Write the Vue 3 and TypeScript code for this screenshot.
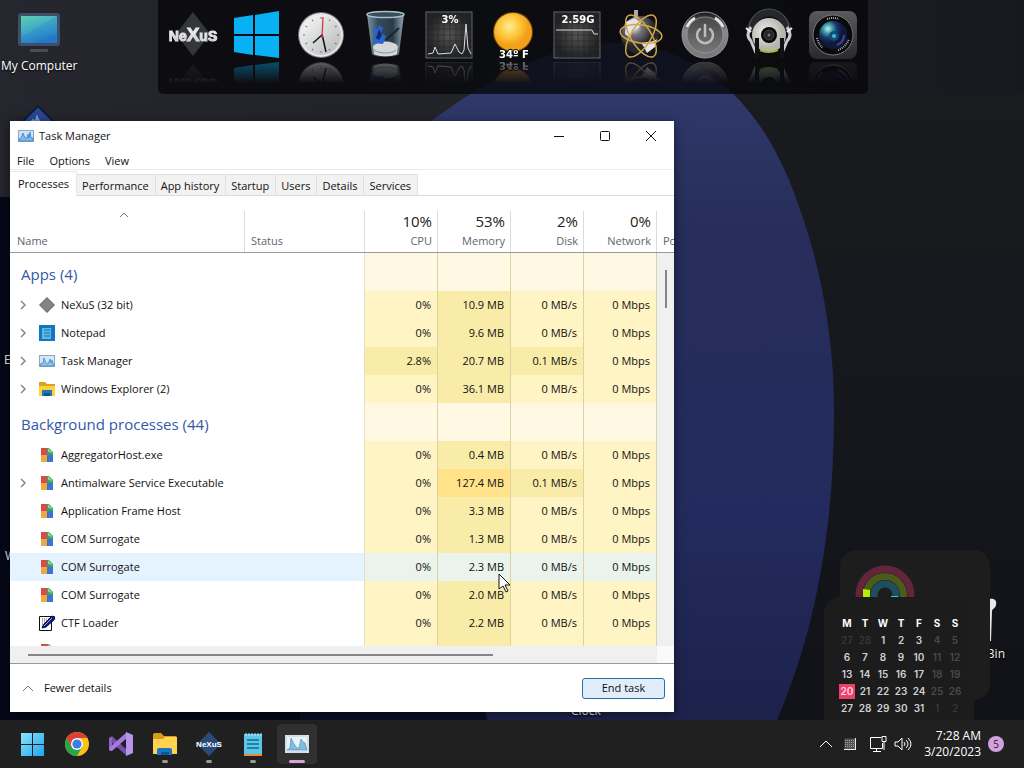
<script setup lang="ts">
interface Proc {
  name: string
  icon: string
  open?: boolean
  cpu: string
  mem: string
  disk: string
  net: string
  hot?: boolean
  selected?: boolean
}
interface Group {
  title: string
  rows: Proc[]
}

const p = (name: string, icon: string, mem: string, extra: Partial<Proc> = {}): Proc => ({
  name, icon, cpu: '0%', mem, disk: '0 MB/s', net: '0 Mbps', ...extra,
})

const groups: Group[] = [
  {
    title: 'Apps (4)',
    rows: [
      p('NeXuS (32 bit)', 'nexus', '10.9 MB', { open: true }),
      p('Notepad', 'notepad', '9.6 MB', { open: true }),
      p('Task Manager', 'taskmgr', '20.7 MB', { open: true, cpu: '2.8%', disk: '0.1 MB/s' }),
      p('Windows Explorer (2)', 'folder', '36.1 MB', { open: true }),
    ],
  },
  {
    title: 'Background processes (44)',
    rows: [
      p('AggregatorHost.exe', 'exe', '0.4 MB'),
      p('Antimalware Service Executable', 'exe', '127.4 MB', { open: true, disk: '0.1 MB/s', hot: true }),
      p('Application Frame Host', 'exe', '3.3 MB'),
      p('COM Surrogate', 'exe', '1.3 MB'),
      p('COM Surrogate', 'exe', '2.3 MB', { selected: true }),
      p('COM Surrogate', 'exe', '2.0 MB'),
      p('CTF Loader', 'ctf', '2.2 MB'),
      p('', 'exe', '', { cpu: '', disk: '', net: '' }),
    ],
  },
]

const tabs = ['Processes', 'Performance', 'App history', 'Startup', 'Users', 'Details', 'Services']
const columns = [
  { total: '10%', label: 'CPU' },
  { total: '53%', label: 'Memory' },
  { total: '2%', label: 'Disk' },
  { total: '0%', label: 'Network' },
]

const dock = ['nexus', 'windows', 'clock', 'trash', 'cpu', 'weather', 'ram', 'globe', 'power', 'music', 'camera']
const pinned = [
  { id: 'start', label: 'Start' },
  { id: 'chrome', label: 'Chrome' },
  { id: 'vs', label: 'Visual Studio' },
  { id: 'folder', label: 'File Explorer', running: true },
  { id: 'nexus', label: 'NeXuS', running: true },
  { id: 'notepad', label: 'Notepad', running: true },
  { id: 'taskmgr', label: 'Task Manager', running: true, active: true },
]

const weekdays = ['M', 'T', 'W', 'T', 'F', 'S', 'S']
const weeks: number[][] = [
  [27, 28, 1, 2, 3, 4, 5],
  [6, 7, 8, 9, 10, 11, 12],
  [13, 14, 15, 16, 17, 18, 19],
  [20, 21, 22, 23, 24, 25, 26],
  [27, 28, 29, 30, 31, 1, 2],
]
const dayClass = (w: number, d: number) => ({
  outside: (w === 0 && d < 2) || (w === 4 && d > 4),
  weekend: d > 4,
  today: w === 3 && d === 0,
})
const ticks = Array.from({ length: 12 }, (_, i) => i * 30)
</script>

<template>
  <div class="desktop">
    <svg class="wallpaper" viewBox="0 0 1024 768" preserveAspectRatio="none" aria-hidden="true">
      <defs>
        <linearGradient id="wpTop" x1="0" y1="0" x2="1" y2="0">
          <stop offset="0" stop-color="#25262e" /><stop offset=".5" stop-color="#222328" /><stop offset="1" stop-color="#18191e" />
        </linearGradient>
        <linearGradient id="wpRight" x1="0" y1="0" x2="0" y2="1">
          <stop offset="0" stop-color="#1a1b1f" /><stop offset=".5" stop-color="#16171c" /><stop offset="1" stop-color="#101116" />
        </linearGradient>
        <linearGradient id="wpBlue" x1="0" y1="0" x2="0" y2="1">
          <stop offset="0" stop-color="#323c70" /><stop offset=".25" stop-color="#272e5b" /><stop offset=".65" stop-color="#232b5e" /><stop offset="1" stop-color="#1b2046" />
        </linearGradient>
      </defs>
      <rect width="1024" height="768" fill="url(#wpTop)" />
      <rect x="674" y="94" width="350" height="674" fill="url(#wpRight)" />
      <rect y="197" width="300" height="571" fill="#060817" />
      <rect x="300" y="600" width="240" height="168" fill="#0b0e24" />
      <path d="M350 190C440 105 530 46 610 43c76 0 140 44 179 137 30 74 45 150 45 232 0 105-15 211-57 308l-20 48H500z" fill="url(#wpBlue)" />
    </svg>

    <div class="shortcut">
      <svg viewBox="0 0 48 44" aria-hidden="true">
        <defs><linearGradient id="scr" x1="0" y1="0" x2=".4" y2="1"><stop offset="0" stop-color="#5fd0b4" /><stop offset=".55" stop-color="#3fa9c4" /><stop offset="1" stop-color="#2277c8" /></linearGradient></defs>
        <rect x="3" y="3" width="42" height="33" rx="3" fill="#3d5068" /><rect x="6" y="6" width="36" height="27" fill="url(#scr)" />
        <path d="M42 6v10L21 33H6v-6z" fill="#2d86cf" opacity=".35" /><rect x="15" y="39" width="18" height="3" rx="1" fill="#4a4d52" />
      </svg>
      <span>My Computer</span>
    </div>
    <svg class="nexus-shortcut" viewBox="0 0 48 48" aria-hidden="true"><path d="M24 1l23 23-23 23L1 24z" fill="#29478f" stroke="#10193b" stroke-width="2" /><path d="M15 19l4-4 2 3 2-6 3 6" stroke="#7f9bd0" stroke-width="2" fill="none" /></svg>
    <span class="hidden-label label-e">E</span>
    <span class="hidden-label label-w">W</span>
    <span class="hidden-label label-clock">Clock</span>

    <svg class="bin-edge" viewBox="0 0 12 44" aria-hidden="true"><path d="M4 1c6-1 8 2 7 6-1 4-3 3-4 6L6 43H4z" fill="#e8e8e8" /></svg>
    <span class="hidden-label label-bin">Bin</span>

    <nav class="dock" aria-label="Dock">
      <a v-for="id in dock" :key="id" href="#" :aria-label="id" class="dock-item">
        <svg v-if="id === 'nexus'" viewBox="0 0 48 48">
          <defs><linearGradient id="chromeText" x1="0" y1="0" x2="0" y2="1"><stop offset="0" stop-color="#fff" /><stop offset=".6" stop-color="#e2e2e2" /><stop offset="1" stop-color="#999" /></linearGradient></defs>
          <path d="M24 2l17 22-17 22L7 24z" fill="#33363a" />
          <text x="24" y="31" text-anchor="middle" class="logo-text" fill="url(#chromeText)" stroke="#e0e0e0">Ne<tspan class="logo-x">X</tspan>uS</text>
        </svg>
        <svg v-else-if="id === 'windows'" viewBox="0 0 48 48"><path d="M1 8l19-3v19H1zM22 5l24-4v23H22zM1 26h19v19L1 42zM22 26h24v22l-24-3z" fill="#08b1f4" /></svg>
        <svg v-else-if="id === 'clock'" viewBox="0 0 48 48">
          <defs><linearGradient id="ck" x1="0" y1="0" x2="1" y2="1"><stop offset="0" stop-color="#fafafa" /><stop offset="1" stop-color="#b4b8b6" /></linearGradient></defs>
          <circle cx="24" cy="25" r="23" fill="#777" /><circle cx="24" cy="25" r="22" fill="#e8e8e8" /><circle cx="24" cy="25" r="20" fill="url(#ck)" />
          <path v-for="a in ticks" :key="a" d="M24 7v2" :transform="`rotate(${a} 24 25)`" stroke="#777" stroke-width="1" />
          <path d="M25 25l-9 8M25 24l4 18" stroke="#111" stroke-width="1.500" /><path d="M25 28l1-21" stroke="#dc3545" stroke-width="1.300" />
        </svg>
        <svg v-else-if="id === 'trash'" viewBox="0 0 48 48">
          <defs><linearGradient id="tr"><stop offset="0" stop-color="#7d95a4" /><stop offset=".3" stop-color="#354b5b" /><stop offset=".7" stop-color="#293a49" /><stop offset="1" stop-color="#93a9b5" /></linearGradient></defs>
          <path d="M6 4h37l-5 40c-3 4-24 4-27 0z" fill="url(#tr)" />
          <path d="M12 36c6-6 20-6 25 0l-1 8c-4 3-19 3-23 0z" fill="#d4d7d8" /><path d="M13 40c5 4 18 4 22 0" stroke="#8a8f92" fill="none" />
          <path d="M13 18l4 1 1-4 4 3-2 5 5 3-3 8-9-1-1-6 3-2-3-3z" fill="#2b63d7" /><path d="M18 19l3 6-3 5-3-2z" fill="#132b65" />
          <path d="M25 30L38 18" stroke="#1d242c" stroke-width="2" /><ellipse cx="24.500" cy="4.500" rx="18.500" ry="3" fill="#384e59" stroke="#a9bfca" stroke-width="1.500" />
        </svg>
        <svg v-else-if="id === 'cpu' || id === 'ram'" viewBox="0 0 48 48">
          <defs><radialGradient :id="'grid' + id"><stop offset="0" stop-color="#555" /><stop offset="1" stop-color="#222326" /></radialGradient></defs>
          <rect x="1" y="2" width="46" height="46" :fill="`url(#grid${id})`" stroke="#65676b" />
          <path d="M1 13h46M1 19h46M1 25h46M1 31h46M1 37h46M1 43h46M7 2v46M13 2v46M19 2v46M25 2v46M31 2v46M37 2v46M43 2v46" stroke="#222" stroke-width=".5" />
          <path v-if="id === 'cpu'" d="M3 44l5-1 2-6 3 7 13-1 4-9 4 8 3 2 2-4 2-26 2 24 3 6" fill="none" stroke="#ddd" />
          <path v-else d="M3 20h36l2 4h4" fill="none" stroke="#ddd" />
          <text x="25" y="13" text-anchor="middle" class="gauge-text">{{ id === 'cpu' ? '3%' : '2.59G' }}</text>
        </svg>
        <svg v-else-if="id === 'weather'" viewBox="0 0 48 48">
          <defs><radialGradient id="sun" cx=".4" cy=".35"><stop offset="0" stop-color="#ffec91" /><stop offset=".6" stop-color="#fdc437" /><stop offset="1" stop-color="#f3a019" /></radialGradient></defs>
          <circle cx="24" cy="22" r="20" fill="#d47b08" opacity=".5" /><circle cx="24" cy="22" r="19" fill="url(#sun)" />
          <text x="25" y="48" text-anchor="middle" class="gauge-text outlined">34º F</text>
        </svg>
        <svg v-else-if="id === 'globe'" viewBox="0 0 48 48">
          <defs><radialGradient id="gl" cx=".35" cy=".3"><stop offset="0" stop-color="#f0edf2" /><stop offset=".4" stop-color="#77747d" /><stop offset="1" stop-color="#26262c" /></radialGradient></defs>
          <circle cx="23" cy="25" r="19" fill="url(#gl)" /><path d="M9 12l8-4 7 4-2 6-6 2-3 8-5-4zM24 33l13-2 3-2-2 8-8 6-3-6z" fill="#e6e2ea" />
          <rect x="17" y="0" width="4" height="9" fill="#aaa" />
          <g fill="none" stroke="#d0a944" stroke-width="1.500"><ellipse cx="24" cy="26" rx="10" ry="24" transform="rotate(32 24 26)" /><ellipse cx="24" cy="26" rx="10" ry="24" transform="rotate(-32 24 26)" /><ellipse cx="24" cy="24" rx="21" ry="9" transform="rotate(8 24 24)" /></g>
        </svg>
        <svg v-else-if="id === 'power'" viewBox="0 0 48 48">
          <defs>
            <linearGradient id="pw" x1="0" y1="0" x2="0" y2="1"><stop offset="0" stop-color="#151515" /><stop offset=".4" stop-color="#888" /><stop offset="1" stop-color="#777" /></linearGradient>
            <linearGradient id="pwi" x1="0" y1="0" x2="0" y2="1"><stop offset="0" stop-color="#484848" /><stop offset="1" stop-color="#777" /></linearGradient>
          </defs>
          <circle cx="24" cy="25" r="23" fill="url(#pw)" stroke="#999" /><path d="M6 17a20 20 0 018-9M34 8a20 20 0 018 9" fill="none" stroke="#e5e5e5" stroke-width="3" />
          <circle cx="24" cy="25" r="18" fill="url(#pwi)" stroke="#999" stroke-width=".8" /><path d="M19 19a8 8 0 1010 0M24 15v11" stroke="#bcbcbc" stroke-width="2.500" fill="none" stroke-linecap="round" />
        </svg>
        <svg v-else-if="id === 'music'" viewBox="0 0 48 48">
          <defs><radialGradient id="disc" cx=".4" cy=".4"><stop offset="0" stop-color="#eee" /><stop offset="1" stop-color="#b3b6ac" /></radialGradient></defs>
          <path d="M5 22a19 19 0 0138 0" fill="none" stroke="#26272a" stroke-width="7" /><path d="M4 19a20 20 0 0140 0" fill="none" stroke="#555" />
          <path d="M6 17q-6 8 0 14l5 12M42 17q6 8 0 14l-5 12" fill="none" stroke="#c9cbcc" stroke-width="3" /><path d="M1 18l5 4M47 18l-5 4" stroke="#eee" stroke-width="2" />
          <circle cx="24" cy="25" r="17" fill="url(#disc)" /><circle cx="24" cy="25" r="8" fill="#080808" /><circle cx="24" cy="25" r="5" fill="#252525" stroke="#444" /><circle cx="24" cy="25" r="1.500" fill="#777" />
          <path d="M15 40q9 4 18 0" stroke="#a5b831" stroke-width="2" fill="none" /><path d="M12 28v20M37 28v20" stroke="#111" stroke-width="4" />
        </svg>
        <svg v-else viewBox="0 0 48 48">
          <defs>
            <linearGradient id="body" x1="0" y1="0" x2="0" y2="1"><stop offset="0" stop-color="#5a5a5d" /><stop offset="1" stop-color="#29292b" /></linearGradient>
            <radialGradient id="lens" cx=".32" cy=".28"><stop offset="0" stop-color="#c6eee8" /><stop offset=".35" stop-color="#3698a8" /><stop offset=".65" stop-color="#1d3468" /><stop offset="1" stop-color="#12183a" /></radialGradient>
          </defs>
          <rect x="0" y="1" width="48" height="48" rx="8" fill="url(#body)" /><circle cx="24" cy="25" r="20" fill="#090a0c" stroke="#777" /><path d="M18 9q6-2 12 0M8 28q2 7 6 10M29 40q8-3 11-11" fill="none" stroke="#aaa" stroke-width="2" stroke-dasharray="1 1" /><circle cx="24" cy="25" r="14" fill="url(#lens)" /><path d="M35 25a11 11 0 01-7 10" fill="none" stroke="#3a4499" stroke-width="2" /><circle cx="25" cy="26" r="5" fill="#0d4d78" /><circle cx="25" cy="26" r="2" fill="#49b8d4" />
        </svg>
      </a>
    </nav>

    <section class="widget" aria-label="Activity">
      <svg viewBox="0 0 60 60" aria-hidden="true">
        <g fill="none" stroke-width="7"><circle cx="30" cy="30" r="26" stroke="#63253b" /><circle cx="30" cy="30" r="18.500" stroke="#4c5a1c" /><circle cx="30" cy="30" r="11" stroke="#1c5061" /></g>
        <path d="M8 35V24l7 1v10z" fill="#b5f000" /><path d="M36 31h7v4h-7z" fill="#15cce0" /><path d="M45 32h6v3h-6z" fill="#b5f000" />
      </svg>
    </section>

    <section class="calendar" aria-label="Calendar">
      <table>
        <thead><tr><th v-for="(d, i) in weekdays" :key="i">{{ d }}</th></tr></thead>
        <tbody>
          <tr v-for="(week, w) in weeks" :key="w">
            <td v-for="(day, d) in week" :key="d" :class="dayClass(w, d)">{{ day }}</td>
          </tr>
        </tbody>
      </table>
    </section>

    <main class="window">
      <header class="titlebar">
        <svg class="i16" viewBox="0 0 16 16"><rect x=".5" y="2.500" width="15" height="11" fill="#c9e4f7" stroke="#8da9c0" /><path d="M1 11l2-1 2-5 2 5 2 0 1-4 1 4 1-6 1 6 2 0v3H1z" fill="#82bbe8" stroke="#3580c4" stroke-width=".8" /></svg>
        <h1>Task Manager</h1>
        <button type="button" aria-label="Minimize"><svg viewBox="0 0 12 12"><path d="M1 6.500h10" /></svg></button>
        <button type="button" aria-label="Maximize"><svg viewBox="0 0 12 12"><rect x="1.500" y="1.500" width="9" height="9" rx="1" /></svg></button>
        <button type="button" aria-label="Close"><svg viewBox="0 0 12 12"><path d="M1 1l10 10M11 1L1 11" /></svg></button>
      </header>
      <div class="menubar">
        <button type="button">File</button><button type="button">Options</button><button type="button">View</button>
      </div>
      <div class="tabs" role="tablist">
        <button v-for="(t, i) in tabs" :key="t" type="button" role="tab" :aria-selected="i === 0" :class="{ current: i === 0 }">{{ t }}</button>
      </div>

      <div class="list">
        <table class="procs">
          <colgroup><col /><col class="c-status" /><col v-for="c in columns" :key="c.label" class="c-num" /><col class="c-end" /></colgroup>
          <thead>
            <tr>
              <th class="h-name"><svg class="sort" viewBox="0 0 10 6"><path d="M1 5l4-4 4 4" /></svg><small>Name</small></th>
              <th class="h-status"><small>Status</small></th>
              <th v-for="c in columns" :key="c.label" class="h-num"><b>{{ c.total }}</b><small>{{ c.label }}</small></th>
              <th class="h-end"><small>Power usage</small></th>
            </tr>
          </thead>
          <tbody v-for="g in groups" :key="g.title">
            <tr class="group"><th colspan="2" scope="rowgroup">{{ g.title }}</th><td class="num" /><td class="num" /><td class="num" /><td class="num" /><td class="rail" /></tr>
            <tr v-for="(r, i) in g.rows" :key="i" :class="{ selected: r.selected }">
              <td colspan="2" class="name">
                <div>
                  <svg class="arrow" viewBox="0 0 8 10"><path v-if="r.open" d="M2 1l4 4-4 4" /></svg>
                  <svg v-if="r.icon === 'nexus'" class="i16" viewBox="0 0 16 16"><path d="M8 0l8 8-8 8-8-8z" fill="#62686b" /><path d="M8 1l7 7-7 7-7-7z" fill="#7f8486" /></svg>
                  <svg v-else-if="r.icon === 'notepad'" class="i16" viewBox="0 0 16 16"><path d="M0 0h16v16H0z" fill="#0f78be" /><path d="M3 3h9v11H3z" fill="#63b9e5" /><path d="M5 5h6M5 8h6M5 11h6" stroke="#146fa9" /></svg>
                  <svg v-else-if="r.icon === 'taskmgr'" class="i16" viewBox="0 0 16 16"><rect x=".5" y="2.500" width="15" height="11" fill="#d2e8f8" stroke="#8da9c0" /><path d="M1 11l3-1 1-5 2 5 2 1 2-5 1 4 1-3 1 4 1 0v2H1z" fill="#91c4ea" stroke="#4489c3" stroke-width=".8" /></svg>
                  <svg v-else-if="r.icon === 'folder'" class="i16" viewBox="0 0 16 16"><path d="M0 1h6l2 2h8v12H0z" fill="#d9a418" /><path d="M0 5h16v10H0z" fill="#ffd044" /><path d="M3 9h10v6H3z" fill="#1e78b4" /><path d="M5 12h6v3H5z" fill="#15558d" /></svg>
                  <svg v-else-if="r.icon === 'exe'" class="i16" viewBox="0 0 16 16"><path d="M2 1h6v7H2z" fill="#d94b4b" /><path d="M8 1h2l4 4v3H8z" fill="#36a853" /><path d="M9 1l5 5-5-1z" fill="#8ed39c" /><path d="M2 8h6v7H2z" fill="#efa83d" /><path d="M8 8h6v7H8z" fill="#3d73d4" /></svg>
                  <svg v-else class="i16" viewBox="0 0 16 16"><path d="M.5 1.500h12v14H.5z" fill="#fff" stroke="#111" /><path d="M3 4h8M3 6h7M3 8h4M3 10h3" stroke="#555" stroke-dasharray="1 1" /><path d="M3 13l2-4 8-8 3 1-1 3-8 7z" fill="#10217c" stroke="#080d40" /><path d="M5 11l8-8" stroke="#91a7e8" /></svg>
                  <span>{{ r.name }}</span>
                </div>
              </td>
              <td class="num" :class="{ warm: r.cpu === '2.8%' }">{{ r.cpu }}</td>
              <td class="num warm" :class="{ hot: r.hot }">{{ r.mem }}</td>
              <td class="num" :class="{ warm: r.disk === '0.1 MB/s' }">{{ r.disk }}</td>
              <td class="num">{{ r.net }}</td>
              <td class="rail" />
            </tr>
          </tbody>
        </table>
        <i class="vthumb" />
      </div>
      <div class="hscroll"><i /></div>
      <footer>
        <button type="button" class="fewer"><svg viewBox="0 0 12 8"><path d="M1 7l5-5 5 5" /></svg>Fewer details</button>
        <button type="button" class="end">End task</button>
      </footer>
    </main>

    <div class="taskbar">
      <div class="pinned">
        <button v-for="a in pinned" :key="a.id" type="button" :aria-label="a.label" :class="{ running: a.running, active: a.active }">
          <svg v-if="a.id === 'start'" viewBox="0 0 24 24"><defs><linearGradient id="st" x1="0" y1="0" x2="1" y2="1"><stop offset="0" stop-color="#8ce4fb" /><stop offset="1" stop-color="#1ba5ef" /></linearGradient></defs><path d="M0 1h11v11H0zM12 1h11v11H12zM0 13h11v11H0zM12 13h11v11H12z" fill="url(#st)" /></svg>
          <svg v-else-if="a.id === 'chrome'" viewBox="0 0 24 24"><circle cx="12" cy="12" r="12" fill="#fbc116" /><path d="M1.600 6A12 12 0 0012 24l5.200-9L12 12 6.800 15z" fill="#2ba24c" /><path d="M12 6h10.400A12 12 0 001.600 6l5.200 9z" fill="#df3f36" /><circle cx="12" cy="12" r="6" fill="#fff" /><circle cx="12" cy="12" r="4.600" fill="#3b7de9" /></svg>
          <svg v-else-if="a.id === 'vs'" viewBox="0 0 24 24"><path d="M0 6l3-2 15 14v6L1 9z" fill="#7350ae" /><path d="M0 6l3-1v14l-3-1z" fill="#8d65c7" /><path d="M0 18l3 1L18 6V0L1 15z" fill="#a879dc" /><path d="M17 0l7 3v18l-7 3z" fill="#b993eb" /></svg>
          <svg v-else-if="a.id === 'folder'" viewBox="0 0 24 24"><path d="M0 3q0-2 2-2h6l3 3h11q2 0 2 2v14H0z" fill="#d69e18" /><path d="M0 7h10l2-2h12v17H0z" fill="#ffd251" /><path d="M4 23v-5q0-2 2-2h11q2 0 2 2v5z" fill="#1778bd" /><path d="M8 20h8v3H8z" fill="#105592" /></svg>
          <svg v-else-if="a.id === 'nexus'" viewBox="0 0 24 24"><path d="M12 0l12 12-12 12L0 12z" fill="#294a78" /><text x="12" y="15" text-anchor="middle" class="small-logo">NeXuS</text></svg>
          <svg v-else-if="a.id === 'notepad'" viewBox="0 0 24 24"><path d="M3 2h18v20H3z" fill="#5bc6e8" /><path d="M3 22h18v2H3z" fill="#e58b36" /><path d="M5 1v3M8 1v3M11 1v3M14 1v3M17 1v3M20 1v3" stroke="#b8e9f6" /><path d="M6 8h12M6 12h12M6 16h12" stroke="#166b91" stroke-width="1.500" /></svg>
          <svg v-else viewBox="0 0 24 24"><path d="M0 3h24v18H0z" fill="#d5dfe6" /><path d="M2 5h20v14H2z" fill="#e8f3fa" /><path d="M2 18l3-2 1-10 3 6 3 4h2l2-9 2 3 2 1 2 7H2z" fill="#7fbce0" stroke="#408ab6" stroke-width=".6" /></svg>
        </button>
      </div>
      <div class="tray">
        <button type="button" aria-label="Show hidden icons"><svg class="line" viewBox="0 0 16 16"><path d="M2 11l6-6 6 6" /></svg></button>
        <button type="button" aria-label="Touch keyboard"><svg viewBox="0 0 16 16"><path d="M2.500 2.500h11v11h-11z" fill="#555" /><path d="M3 4.500h10M3 6.500h10M3 8.500h10M3 10.500h10" stroke="#999" stroke-dasharray="1 1" /><path d="M2 13.500h12M13.500 2v12" stroke="#eee" /></svg></button>
        <button type="button" aria-label="Network" class="wide network"><svg class="line" viewBox="0 0 18 16"><path d="M12 1.500H1.500v11h12V7M7.500 12v3M4 15.500h8M13 .500h4v5h-4zM15 5v9" /></svg></button>
        <button type="button" aria-label="Volume" class="wide"><svg class="line" viewBox="0 0 18 16"><path d="M1 6h3l4-4v12l-4-4H1zM10 6q2 2 0 4M12 4q4 4 0 8M14 2q6 6 0 12" /></svg></button>
        <time datetime="2023-03-20T07:28">7:28 AM<br />3/20/2023</time>
        <span class="badge">5</span>
      </div>
    </div>

    <svg class="pointer" viewBox="0 0 13 20" aria-hidden="true"><path d="M1 1v15l4-3 3 6 2-1-3-6h5z" fill="#fff" stroke="#111" /></svg>
  </div>
</template>

<style>
body { margin: 0; background: #202020; }
</style>

<style scoped>
* { box-sizing: border-box; }
.desktop {
  position: relative;
  height: 100vh;
  overflow: hidden;
  font-family: "Open Sans", "Noto Sans", sans-serif;
  font-size: 12px;
  line-height: 16px;
  color: #111;
}
button { font: inherit; color: inherit; border: 0; background: none; padding: 0; }
svg { display: block; }
table { border-collapse: separate; border-spacing: 0; }
.wallpaper { position: absolute; inset: 0; width: 100%; height: 100%; }

.shortcut { position: absolute; left: 1px; top: 10px; color: #fff; display: flex; flex-direction: column; align-items: center; gap: 4px; text-shadow: 0 1px 2px #000; }
.shortcut svg { width: 48px; height: 44px; }
.nexus-shortcut { position: absolute; left: 14px; top: 105px; width: 48px; }
.hidden-label { position: absolute; color: #eee; text-shadow: 0 1px 2px #000; }
.label-e { left: 4px; top: 352px; }
.label-w { left: 5px; top: 548px; }
.label-clock { left: 571px; bottom: 49px; }
.label-bin { right: 19px; bottom: 106px; }
.bin-edge { position: absolute; right: 27px; bottom: 126px; width: 12px; height: 44px; }

.dock { position: absolute; left: 158px; top: 0; display: flex; gap: 16px; padding: 10px 11px 36px; background: rgba(8, 8, 11, .8); border-radius: 0 0 5px 5px; }
.dock-item { display: block; width: 48px; height: 48px; -webkit-box-reflect: below 4px linear-gradient(transparent 55%, rgba(0, 0, 0, .4)); }
.dock-item svg { width: 48px; height: 48px; overflow: visible; }
.logo-text { font: bold 14px "Liberation Sans", sans-serif; stroke-width: 1px; }
.logo-x { font-size: 19px; }
.gauge-text { font: bold 10px "DejaVu Sans", sans-serif; fill: #fff; }
.outlined { stroke: #111; stroke-width: 2px; paint-order: stroke; }

.widget { position: absolute; right: 34px; bottom: 68px; width: 150px; height: 150px; padding: 15px; border-radius: 16px; background: #1d1d1e; }
.widget svg { width: 60px; height: 60px; }
.calendar { position: absolute; right: 50px; bottom: 48px; padding: 18px 10px 3px 14px; border-radius: 16px 16px 0 0; background: #1c1c1d; }
.calendar th, .calendar td { width: 18px; height: 17px; padding: 1px; text-align: center; font: 600 10px/15px Inter, sans-serif; color: #d0d0d0; }
.calendar th { color: #fff; font-weight: 700; }
.calendar td.weekend { color: #4a4a4b; }
.calendar td.outside { color: #353536; }
.calendar td.today { background: #ee3f69; background-clip: content-box; color: #ffd9e2; }

.window { position: absolute; left: 10px; top: 121px; bottom: 56px; width: calc(100% - 360px); background: #fff; display: flex; flex-direction: column; font-size: 11px; box-shadow: 0 2px 10px rgba(0, 0, 0, .5); }
.titlebar { display: flex; align-items: center; height: 29px; padding-left: 8px; }
.titlebar h1 { flex: 1; margin: 0 0 0 5px; font-size: 11px; font-weight: 400; }
.titlebar button { width: 46px; height: 28px; display: grid; place-items: center; }
.titlebar button svg { width: 12px; height: 12px; fill: none; stroke: #111; }
.i16 { width: 16px; height: 16px; flex: none; }
.menubar { display: flex; gap: 15px; padding: 2px 7px 0; height: 20px; border-bottom: 1px solid #ececec; }
.tabs { display: flex; align-items: flex-end; height: 26px; border-bottom: 1px solid #dcdcdc; }
.tabs button { height: 21px; padding: 3px 6px 1px 5px; background: #f2f2f2; border: 1px solid #e0e0e0; border-width: 1px 1px 0 0; }
.tabs .current { height: 25px; background: #fff; padding: 1px 7px 2px 8px; border-color: #e8e8e8; margin-bottom: -1px; }

.list { position: relative; flex: 1; min-height: 0; overflow: hidden; }
.procs { width: 100%; table-layout: fixed; }
.c-status { width: 120px; }
.c-num { width: 73px; }
.c-end { width: 17px; }
thead th { font-weight: 400; }
.procs thead th { height: 57px; padding: 0 6px 3px; vertical-align: bottom; text-align: left; color: #5c6670; border-bottom: 1px solid #999; background: linear-gradient(#dcdcdc, #dcdcdc) right bottom / 1px 41px no-repeat; }
.procs thead .h-name { padding: 0 14px 3px 7px; }
.procs small { display: block; font-size: 11px; line-height: 16px; }
.procs b { display: block; font-weight: 400; font-size: 15px; line-height: 20px; margin-bottom: 2px; color: #222; }
.procs thead .h-num { text-align: right; }
.procs thead .h-end { overflow: hidden; white-space: nowrap; background: none; }
.sort { width: 10px; height: 6px; margin: 0 auto 15px; }
.sort path, .arrow path, .fewer path { fill: none; stroke: #777; }
.group th { height: 38px; padding: 4px 11px 0; font-size: 15px; line-height: 20px; font-weight: 400; text-align: left; color: #3159a8; border-right: 1px solid #e5dfc8; }
.procs .num { height: 28px; padding: 0 6px 0 0; text-align: right; background: #fff4c4; border-right: 1px solid #ddd3a2; }
.procs .num.warm { background: #f9eca8; }
.procs .num.hot { background: #ffe28a; }
.procs .group .num { height: 38px; background: #fff9e4; }
.rail { background: #f0f0f0; }
.name { height: 28px; padding: 0; border-right: 1px solid #e5dfc8; }
.name div { display: flex; align-items: center; padding-left: 9px; }
.arrow { width: 8px; height: 10px; margin-right: 12px; }
.arrow path { stroke: #888; stroke-width: 1.5; }
.name span { margin-left: 6px; white-space: nowrap; }
.selected .name { background: #e5f3ff; }
.procs .selected .num { background: #ebf3ed; }
.vthumb { position: absolute; right: 7px; top: 74px; width: 2px; height: 38px; background: #858585; }
.hscroll { height: 17px; margin-right: 17px; padding: 8px 0 0 18px; background: #f0f0f0; box-shadow: 17px 0 #fafafa; }
.hscroll i { display: block; width: 74%; height: 2px; background: #858585; }
footer { display: flex; align-items: center; justify-content: space-between; height: 49px; padding: 0 9px 0 12px; border-top: 1px solid #999; background: #fff; position: relative; }
.fewer { display: flex; align-items: center; gap: 10px; }
.fewer svg { width: 12px; height: 8px; }
.end { width: 83px; height: 21px; border: 1px solid #286f9f; border-radius: 3px; background: #e0eefb; }

.taskbar { position: absolute; inset: auto 0 0; height: 48px; background: #202020; display: flex; justify-content: space-between; }
.pinned { display: flex; align-items: center; gap: 4px; padding-left: 13px; }
.pinned button { position: relative; width: 40px; height: 40px; display: grid; place-items: center; border-radius: 4px; }
.pinned svg { width: 24px; height: 24px; overflow: visible; }
.pinned .active { background: #303031; }
.pinned .running::after { content: ""; position: absolute; left: 17px; bottom: 1px; width: 6px; height: 3px; border-radius: 2px; background: #999; }
.pinned .active::after { left: 12px; width: 16px; background: #d3a6d9; }
.small-logo { font: bold 8px "Liberation Sans", sans-serif; fill: #fff; }
.tray { display: flex; align-items: center; padding-right: 20px; color: #fff; }
.tray button { width: 24px; height: 32px; display: grid; place-items: center; }
.tray button svg { width: 16px; height: 16px; }
.tray .wide { width: 25px; }
.tray .wide svg { width: 18px; }
.tray .network { margin-left: 3px; }
.line path { fill: none; stroke: #fff; stroke-width: 1; }
time { text-align: right; margin-left: 9px; white-space: nowrap; }
.badge { width: 16px; height: 16px; margin-left: 7px; border-radius: 50%; background: #d3a0df; color: #222; font-size: 10px; text-align: center; }
.pointer { position: absolute; left: 498px; top: 573px; width: 13px; height: 20px; }
</style>
